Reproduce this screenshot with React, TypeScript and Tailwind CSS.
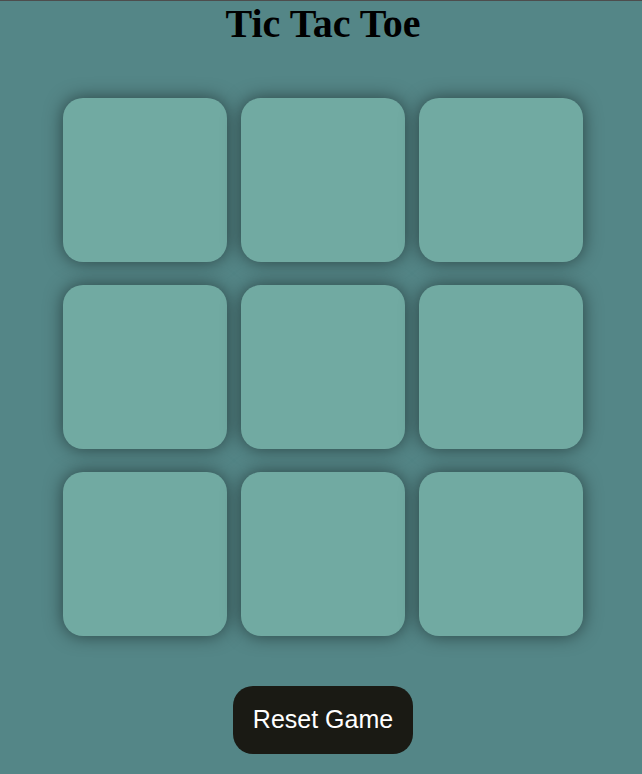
const cells = Array.from({ length: 9 }, (_, i) => i);

export default function App() {
  return (
    <div className="min-h-screen bg-[#548687] border-t border-[#4d4d4d] pl-[4px] flex flex-col items-center">
      <h1 className="text-[40px] leading-[46px] font-bold text-black [font-family:'Liberation_Serif',serif]">
        Tic Tac Toe
      </h1>

      <div className="mt-[51px] grid grid-cols-[repeat(3,164px)] gap-x-[14px] gap-y-[23px]">
        {cells.map((i) => (
          <div
            key={i}
            className="h-[164px] w-[164px] rounded-[20px] bg-[#71aaa2] shadow-[0_0_18px_rgba(0,0,0,0.5)]"
          />
        ))}
      </div>

      <button className="mt-[50px] h-[68px] w-[180px] rounded-[20px] bg-[#1a1a14] text-white text-[25px] [font-family:'Liberation_Sans',Arial,sans-serif]">
        Reset Game
      </button>
    </div>
  );
}
